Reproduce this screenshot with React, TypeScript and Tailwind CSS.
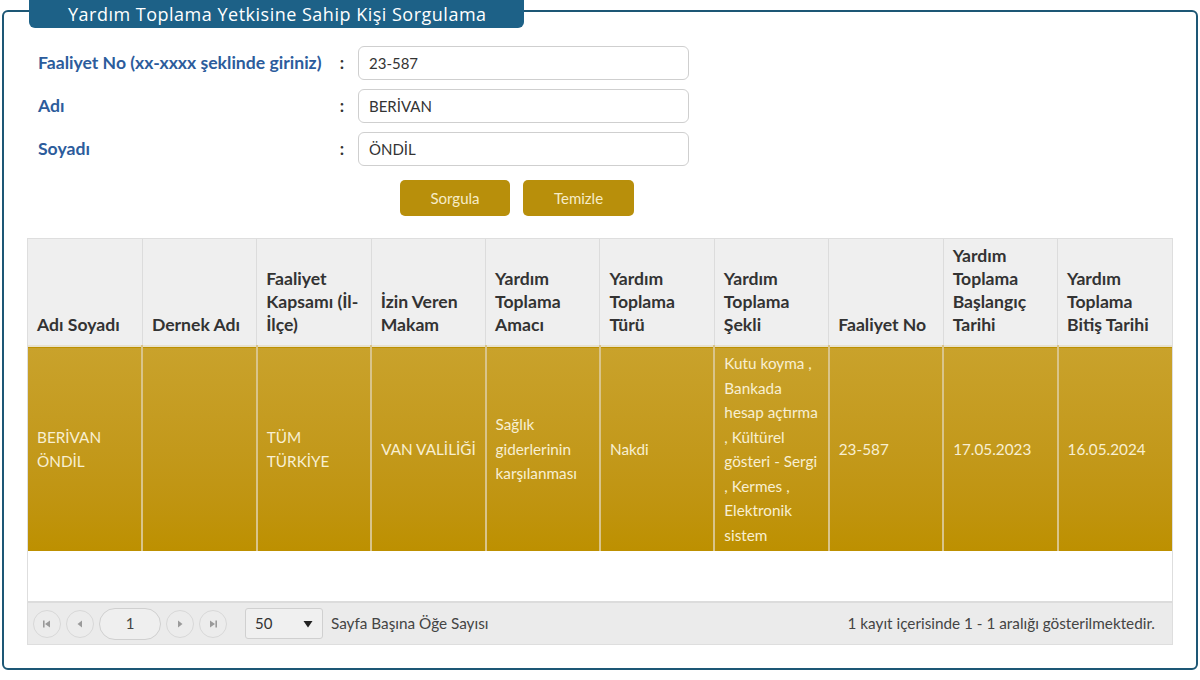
import React from 'react';

const headers = [
  ['Adı Soyadı'],
  ['Dernek Adı'],
  ['Faaliyet', 'Kapsamı (İl-', 'İlçe)'],
  ['İzin Veren', 'Makam'],
  ['Yardım', 'Toplama', 'Amacı'],
  ['Yardım', 'Toplama', 'Türü'],
  ['Yardım', 'Toplama', 'Şekli'],
  ['Faaliyet No'],
  ['Yardım', 'Toplama', 'Başlangıç', 'Tarihi'],
  ['Yardım', 'Toplama', 'Bitiş Tarihi'],
];

const row = [
  ['BERİVAN', 'ÖNDİL'],
  [],
  ['TÜM', 'TÜRKİYE'],
  ['VAN VALİLİĞİ'],
  ['Sağlık', 'giderlerinin', 'karşılanması'],
  ['Nakdi'],
  ['Kutu koyma ,', 'Bankada', 'hesap açtırma', ', Kültürel', 'gösteri - Sergi', ', Kermes ,', 'Elektronik', 'sistem'],
  ['23-587'],
  ['17.05.2023'],
  ['16.05.2024'],
];

const fields = [
  { label: 'Faaliyet No (xx-xxxx şeklinde giriniz)', value: '23-587' },
  { label: 'Adı', value: 'BERİVAN' },
  { label: 'Soyadı', value: 'ÖNDİL' },
];

const PagerButton = ({ children }: { children: React.ReactNode }) => (
  <div className="w-[28px] h-[28px] rounded-full border border-[#d8d8d8] bg-[#ececec] flex items-center justify-center text-[#9a9a9a]">
    {children}
  </div>
);

const App = () => {
  return (
    <div className="w-[1200px] h-[680px] bg-white pt-[10px] px-[2px] font-['Lato',sans-serif]">
      <div className="relative border-2 border-[#1d5775] rounded-[6px] h-[660px] pt-[34px]">
        {/* legend tab */}
        <div className="absolute left-[25px] top-[-12px] w-[495px] h-[28px] bg-[#1d6187] rounded-b-[6px] flex items-center pl-[39px] text-white text-[18px] tracking-[0.5px] font-['Open_Sans',sans-serif]">
          Yardım Toplama Yetkisine Sahip Kişi Sorgulama
        </div>

        <div className="flex flex-col gap-[9px] pl-[34px]">
          {fields.map((f) => (
            <div key={f.label} className="flex items-center">
              <div className="w-[296px] text-[17.6px] font-bold text-[#2c5c9c] whitespace-nowrap">{f.label}</div>
              <div className="w-[16px] text-center text-[17px] font-bold text-[#333]">:</div>
              <div className="ml-[8px] w-[331px] h-[34px] border border-[#cfcfcf] rounded-[6px] flex items-center px-[10px] text-[15px] text-[#333]">
                {f.value}
              </div>
            </div>
          ))}
        </div>

        <div className="flex gap-[13px] ml-[396px] mt-[14px]">
          <button className="w-[110px] h-[36px] rounded-[5px] bg-[#b88f0b] text-[#f6ecc8] text-[15px]">Sorgula</button>
          <button className="w-[111px] h-[36px] rounded-[5px] bg-[#b88f0b] text-[#f6ecc8] text-[15px]">Temizle</button>
        </div>

        <div className="mt-[22px] ml-[23px] w-[1146px] border border-[#dedede]">
          <table className="w-full table-fixed border-collapse">
            <thead>
              <tr className="bg-[#efefef]">
                {headers.map((h, i) => (
                  <th
                    key={i}
                    className="h-[107px] align-bottom text-left font-bold text-[17.6px] leading-[23px] text-[#333] px-[9px] pb-[9px] border-r border-[#dcdcdc] last:border-r-0 whitespace-nowrap"
                  >
                    {h.map((l, j) => (
                      <div key={j}>{l}</div>
                    ))}
                  </th>
                ))}
              </tr>
            </thead>
            <tbody>
              <tr className="bg-gradient-to-b from-[#c9a22b] to-[#bd9000] border-t-2 border-[#e8e2cf]">
                {row.map((c, i) => (
                  <td
                    key={i}
                    className="h-[205px] align-middle text-[15.3px] leading-[24.5px] text-[#f8efd2] px-[9px] border-r-2 border-[#d9c48a] last:border-r-0 whitespace-nowrap"
                  >
                    {c.map((l, j) => (
                      <div key={j}>{l}</div>
                    ))}
                  </td>
                ))}
              </tr>
            </tbody>
          </table>
          <div className="h-[50px] bg-white" />
          <div className="h-[43px] bg-[#ebebeb] border-t-2 border-[#dcdcdc] flex items-center px-[5px] text-[15.3px] text-[#444]">
            <div className="flex items-center gap-[5px]">
              <PagerButton>
                <svg width="10" height="10" viewBox="0 0 10 10" fill="currentColor">
                  <rect x="1" y="1.5" width="1.6" height="7" />
                  <path d="M8 1.5 L3 5 L8 8.5 Z" />
                </svg>
              </PagerButton>
              <PagerButton>
                <svg width="10" height="10" viewBox="0 0 10 10" fill="currentColor">
                  <path d="M7 1.5 L2.5 5 L7 8.5 Z" />
                </svg>
              </PagerButton>
              <div className="w-[62px] h-[32px] rounded-full border border-[#d0d0d0] bg-[#efefef] flex items-center justify-center text-[15px] text-[#444]">
                1
              </div>
              <PagerButton>
                <svg width="10" height="10" viewBox="0 0 10 10" fill="currentColor">
                  <path d="M3 1.5 L7.5 5 L3 8.5 Z" />
                </svg>
              </PagerButton>
              <PagerButton>
                <svg width="10" height="10" viewBox="0 0 10 10" fill="currentColor">
                  <path d="M2 1.5 L7 5 L2 8.5 Z" />
                  <rect x="7.4" y="1.5" width="1.6" height="7" />
                </svg>
              </PagerButton>
            </div>
            <div className="ml-[18px] w-[78px] h-[31px] border border-[#d0d0d0] rounded-[3px] bg-[#f0f0f0] flex items-center justify-between px-[9px] text-[15px] text-[#333]">
              <span>50</span>
              <svg width="10" height="8" viewBox="0 0 10 8" fill="#222">
                <path d="M0.5 1 L9.5 1 L5 7.5 Z" />
              </svg>
            </div>
            <span className="ml-[8px]">Sayfa Başına Öğe Sayısı</span>
            <span className="ml-auto mr-[12px]">1 kayıt içerisinde 1 - 1 aralığı gösterilmektedir.</span>
          </div>
        </div>
      </div>
    </div>
  );
};

export default App;
